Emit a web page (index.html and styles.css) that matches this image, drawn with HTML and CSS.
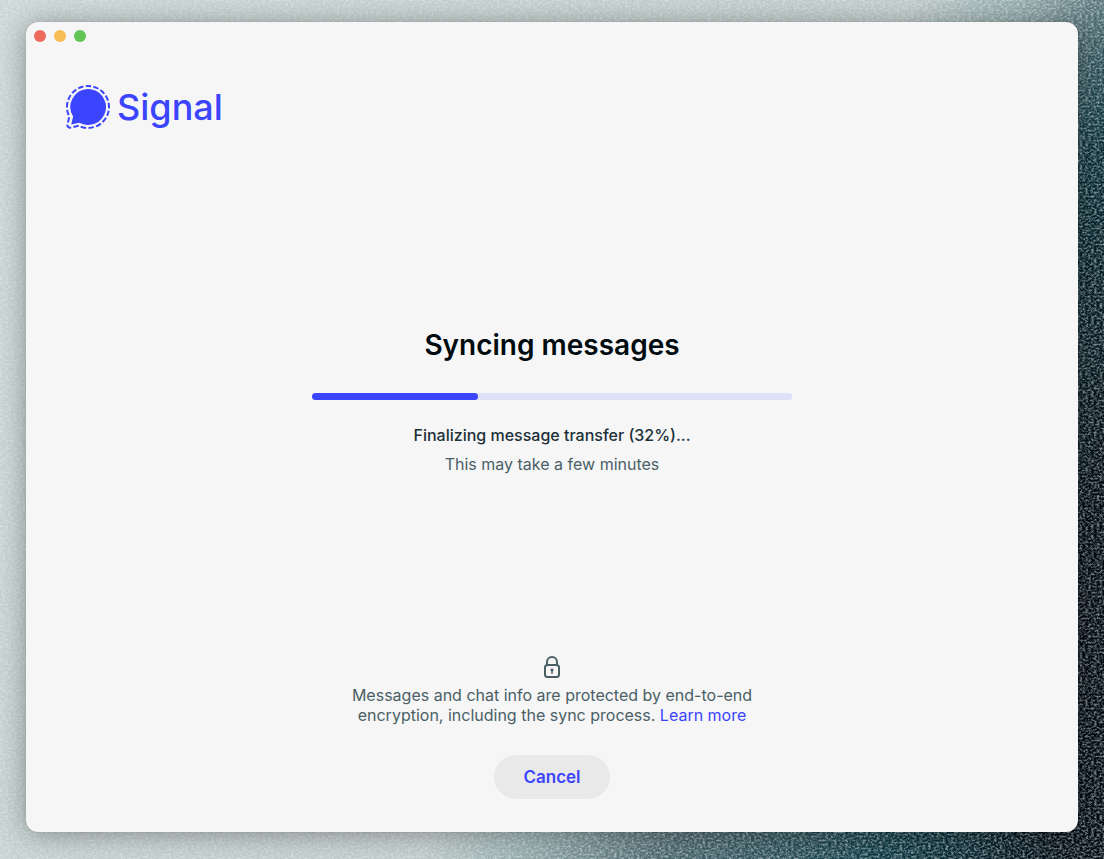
FILE: index.html
```
<!DOCTYPE html>
<html lang="en">
<head>
    <meta charset="UTF-8">
    <meta name="viewport" content="width=device-width, initial-scale=1.0">
    <title>Signal</title>
    <link rel="stylesheet" href="styles.css">
</head>
<body>
    <svg class="grain" aria-hidden="true">
        <filter id="grain" x="0" y="0" width="100%" height="100%">
            <feTurbulence type="fractalNoise" baseFrequency="0.35 0.5" numOctaves="3" seed="4"/>
            <feColorMatrix values="0 0 0 0 0.76  0 0 0 0 0.86  0 0 0 0 0.88  2.6 0 0 0 -1"/>
        </filter>
        <rect width="100%" height="100%" filter="url(#grain)"/>
    </svg>

    <div class="window">
        <div class="titlebar">
            <button type="button" class="dot close" aria-label="Close"></button>
            <button type="button" class="dot minimize" aria-label="Minimize"></button>
            <button type="button" class="dot zoom" aria-label="Zoom"></button>
        </div>

        <header class="brand">
            <svg class="brand-logo" viewBox="0 0 44 44" aria-hidden="true">
                <path class="bubble" d="M22 4a18 18 0 1 1-8.700 33.760L5.200 39.600l1.900-8.050A18 18 0 0 1 22 4z"/>
                <path class="outline" pathLength="180" d="M22 1a21 21 0 1 1-9.500 39.730L4.600 42.600a2.600 2.600 0 0 1-3.150-3.150L3.300 31.600A21 21 0 0 1 22 1z"/>
            </svg>
            <span class="brand-name">Signal</span>
        </header>

        <main class="sync">
            <h1>Syncing messages</h1>
            <progress id="syncProgress" value="34.5" max="100"></progress>
            <label class="status" for="syncProgress">Finalizing message transfer (32%)...</label>
            <p class="hint">This may take a few minutes</p>
        </main>

        <footer class="footer">
            <svg class="lock" viewBox="0 0 18 22" aria-hidden="true">
                <rect class="stroke" x="2" y="9" width="14" height="12" rx="2.500"/>
                <path class="stroke" d="M4 9V6a5 5 0 0 1 10 0v3"/>
                <path d="M9 12.500a1.500 1.500 0 0 1 .8 2.800v2.400H8.200v-2.400A1.500 1.500 0 0 1 9 12.500z"/>
            </svg>
            <p class="info">Messages and chat info are protected by end-to-end encryption, including the sync process. <a href="#">Learn more</a></p>
            <button type="button" class="cancel">Cancel</button>
        </footer>
    </div>
</body>
</html>
```

FILE: styles.css
```
* {
    box-sizing: border-box;
}

body {
    display: flex;
    min-height: 100vh;
    margin: 0;
    padding: 22px 26px 27px;
    font-family: Inter, "Liberation Sans", sans-serif;
    font-size: 16px;
    line-height: 20px;
    color: #4a6066;
    background:
        radial-gradient(ellipse 20% 70% at 108% 75%, #020a12 50%, transparent 100%),
        radial-gradient(ellipse 16% 30% at 104% 26%, #0b343d 40%, transparent 100%),
        linear-gradient(120deg, #ccd7d5 0%, #c2ccca 57%, #92a9aa 64%, #4d686f 72%, #0e3a43 86%, #04121c 97%);
}

/* Desktop texture behind the window */
.grain {
    position: absolute;
    inset: 0;
    width: 100%;
    height: 100%;
    opacity: 0.55;
}

.window {
    position: relative;
    display: flex;
    flex-direction: column;
    flex: 1;
    border-radius: 12px;
    background-color: #f6f6f6;
    box-shadow: 0 0 1px rgba(0, 0, 0, 0.3), 0 2px 28px rgba(0, 0, 0, 0.36);
}

.titlebar {
    display: flex;
    gap: 8px;
    padding: 8px;
}

.dot {
    width: 12px;
    height: 12px;
    padding: 0;
    border: none;
    border-radius: 50%;
}

.close {
    background-color: #ec6a5e;
}

.minimize {
    background-color: #f4bd55;
}

.zoom {
    background-color: #61c454;
}

/* Logo */
.brand {
    display: flex;
    align-items: center;
    gap: 7px;
    padding: 35px 40px 0;
    color: #3b45fd;
}

.brand-logo {
    width: 44px;
    height: 44px;
}

.bubble {
    fill: currentColor;
}

.outline {
    fill: none;
    stroke: currentColor;
    stroke-width: 2;
    stroke-dasharray: 7 3;
    stroke-dashoffset: 3;
}

.brand-name {
    font-size: 36px;
    font-weight: 500;
    line-height: 44px;
}

/* Sync status */
.sync {
    display: flex;
    flex-direction: column;
    align-items: center;
    flex: 1;
    justify-content: center;
    padding: 14px 24px 0;
}

h1 {
    margin: 0 0 28px;
    font-size: 28px;
    font-weight: 600;
    line-height: 40px;
    color: #000b10;
}

progress {
    width: 480px;
    max-width: 100%;
    height: 7px;
    margin-bottom: 25px;
    border: none;
    border-radius: 4px;
    appearance: none;
    background-color: #dde2f8;
}

progress::-webkit-progress-bar {
    border-radius: 4px;
    background-color: #dde2f8;
}

progress::-webkit-progress-value {
    border-radius: 4px;
    background-color: #3b45fd;
}

.status {
    margin-bottom: 9px;
    font-weight: 500;
    color: #1c3038;
}

.hint {
    margin: 0;
}

/* Encryption notice */
.footer {
    display: flex;
    flex-direction: column;
    align-items: center;
    padding: 0 24px 33px;
}

.lock {
    width: 18px;
    height: 22px;
    margin-bottom: 7px;
    fill: #4a6066;
}

.lock .stroke {
    fill: none;
    stroke: #4a6066;
    stroke-width: 2;
}

.info {
    max-width: 420px;
    margin: 0 0 30px;
    text-align: center;
}

.info a {
    color: #3b45fd;
    text-decoration: none;
}

.cancel {
    padding: 12px 29px;
    border: none;
    border-radius: 22px;
    background-color: #e9e9e9;
    font-family: inherit;
    font-size: 17px;
    font-weight: 600;
    line-height: 20px;
    color: #3b45fd;
    cursor: pointer;
}
```
